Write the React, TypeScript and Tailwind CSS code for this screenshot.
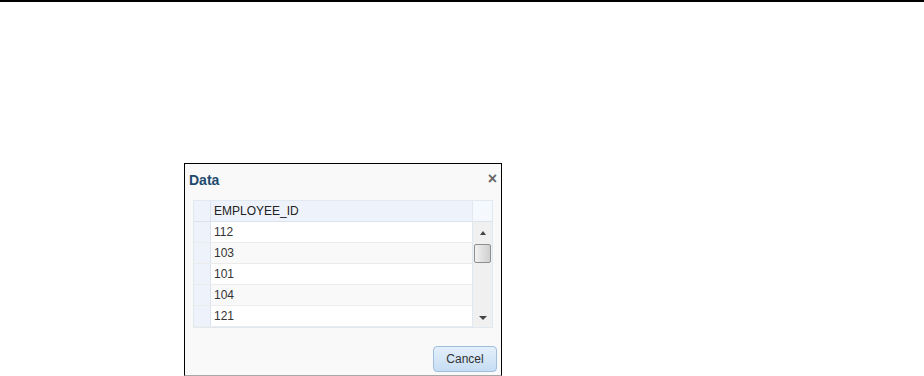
export default function App() {
  const rows = ["112", "103", "101", "104", "121"];

  return (
    <div className="w-[924px] h-[376px] bg-white border-t-2 border-black overflow-hidden font-['Liberation_Sans',Arial,sans-serif]">
      <div className="ml-[184px] mt-[161px] w-[318px] h-[213px] border border-black border-b-[#a8a8a8] bg-[#f9f9f9] flex flex-col">
        <div className="h-[36px] flex items-start justify-between pl-[4px] pr-[4px] pt-[6px]">
          <span className="text-[14px] font-bold text-[#1d4a6e]">Data</span>
          <span className="text-[16px] font-bold text-[#666] leading-none mt-[1px]">×</span>
        </div>

        <div className="mx-[8px] flex border border-[#e2e8ef] bg-white text-[12px] text-[#333]">
          <div className="flex-1 flex flex-col">
            <div className="h-[21px] flex bg-[#eef3fb] border-b border-[#dbe3ee]">
              <div className="w-[17px] border-r border-[#dbe3ee]" />
              <div className="flex-1 flex items-center pl-[3px] text-[#222]">EMPLOYEE_ID</div>
            </div>
            {rows.map((r, i) => (
              <div key={r} className="h-[21px] flex border-b border-[#ececec]">
                <div className="w-[17px] bg-[#eef3fb] border-r border-[#dbe3ee]" />
                <div
                  className={
                    "flex-1 flex items-center pl-[3px] " +
                    (i % 2 === 1 ? "bg-[#f9f9f9]" : "bg-white")
                  }
                >
                  {r}
                </div>
              </div>
            ))}
          </div>

          <div className="w-[20px] flex flex-col border-l border-[#e2e8ef]">
            <div className="h-[21px] bg-[#f5f8fc] border-b border-[#dbe3ee]" />
            <div className="flex-1 bg-[#f0f0f0] flex flex-col items-center">
              <div className="mt-[9px] w-0 h-0 border-l-[3px] border-r-[3px] border-b-[4px] border-l-transparent border-r-transparent border-b-[#444]" />
              <div className="mt-[9px] w-[17px] h-[19px] rounded-[2px] border border-[#8e8e8e] bg-gradient-to-r from-[#f2f2f2] via-[#e0e0e0] to-[#cfcfcf]" />
              <div className="mt-auto mb-[7px] w-0 h-0 border-l-[4px] border-r-[4px] border-t-[4px] border-l-transparent border-r-transparent border-t-[#444]" />
            </div>
          </div>
        </div>

        <div className="flex-1 flex items-end justify-end pr-[4px] pb-[3px]">
          <button className="w-[64px] h-[26px] rounded-[4px] border border-[#9fbfdc] bg-gradient-to-b from-[#e4f0fb] to-[#c6ddf3] text-[12px] text-[#333]">
            Cancel
          </button>
        </div>
      </div>
    </div>
  );
}
